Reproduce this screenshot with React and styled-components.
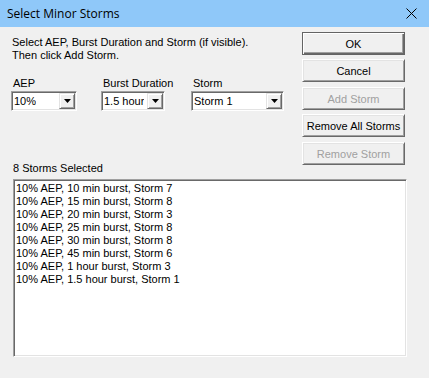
import styled, { createGlobalStyle } from "styled-components";
import { useState } from "react";

const GlobalStyle = createGlobalStyle`
  html, body {
    margin: 0;
    padding: 0;
    background: #f0f0f0;
  }
  * {
    box-sizing: border-box;
  }
`;

const aepOptions = ["10%"];
const durationOptions = ["1.5 hour"];
const stormOptions = ["Storm 1"];

const initialStorms = [
  "10% AEP, 10 min burst, Storm 7",
  "10% AEP, 15 min burst, Storm 8",
  "10% AEP, 20 min burst, Storm 3",
  "10% AEP, 25 min burst, Storm 8",
  "10% AEP, 30 min burst, Storm 8",
  "10% AEP, 45 min burst, Storm 6",
  "10% AEP, 1 hour burst, Storm 3",
  "10% AEP, 1.5 hour burst, Storm 1",
];

const Combo = ({ value, width }) => (
  <StyledCombo $width={width}>
    <ComboText>{value}</ComboText>
    <DropButton>
      <svg width="7" height="4" viewBox="0 0 7 4">
        <path d="M0 0h7L3.5 4z" fill="#000" />
      </svg>
    </DropButton>
  </StyledCombo>
);

const App = () => {
  const [storms, setStorms] = useState(initialStorms);

  return (
    <>
      <GlobalStyle />
      <StyledWindow>
        <TitleBar>
          <Title>Select Minor Storms</Title>
          <CloseButton aria-label="Close">
            <svg width="11" height="11" viewBox="0 0 11 11">
              <path d="M0.5 0.5l10 10M10.5 0.5l-10 10" stroke="#000" strokeWidth="1" />
            </svg>
          </CloseButton>
        </TitleBar>
        <StyledBody>
          <TopSection>
            <LeftColumn>
              <Instructions>
                Select AEP, Burst Duration and Storm (if visible).
                <br />
                Then click Add Storm.
              </Instructions>
              <FieldRow>
                <Field $width={90}>
                  <FieldLabel>AEP</FieldLabel>
                  <Combo value={aepOptions[0]} width={66} />
                </Field>
                <Field $width={90}>
                  <FieldLabel>Burst Duration</FieldLabel>
                  <Combo value={durationOptions[0]} width={64} />
                </Field>
                <Field $width={93}>
                  <FieldLabel>Storm</FieldLabel>
                  <Combo value={stormOptions[0]} width={93} />
                </Field>
              </FieldRow>
              <CountLabel>{storms.length} Storms Selected</CountLabel>
            </LeftColumn>
            <ButtonColumn>
              <DialogButton $default>OK</DialogButton>
              <DialogButton>Cancel</DialogButton>
              <DialogButton disabled>Add Storm</DialogButton>
              <DialogButton onClick={() => setStorms([])}>Remove All Storms</DialogButton>
              <DialogButton disabled>Remove Storm</DialogButton>
            </ButtonColumn>
          </TopSection>
          <StormList>
            {storms.map((storm) => (
              <StormItem key={storm}>{storm}</StormItem>
            ))}
          </StormList>
        </StyledBody>
      </StyledWindow>
    </>
  );
};

export default App;

const StyledWindow = styled.div`
  width: 429px;
  height: 378px;
  display: flex;
  flex-direction: column;
  background: #f0f0f0;
  font-family: "Liberation Sans", Arial, sans-serif;
  font-size: 11px;
  color: #000;
`;

const TitleBar = styled.div`
  height: 27px;
  flex-shrink: 0;
  display: flex;
  align-items: center;
  justify-content: space-between;
  background: #8fc8f9;
  padding: 0 12px 0 7px;
`;

const Title = styled.div`
  font-family: "Open Sans", "Noto Sans", sans-serif;
  font-size: 12px;
  color: #000;
`;

const CloseButton = styled.div`
  display: flex;
  align-items: center;
`;

const StyledBody = styled.div`
  flex: 1;
  display: flex;
  flex-direction: column;
  padding: 5px 24px 21px 13px;
`;

const TopSection = styled.div`
  display: flex;
  justify-content: space-between;
  align-items: flex-start;
`;

const LeftColumn = styled.div`
  display: flex;
  flex-direction: column;
`;

const Instructions = styled.div`
  margin-top: 4px;
  margin-left: -1px;
  line-height: 13px;
`;

const FieldRow = styled.div`
  display: flex;
  margin-top: 15px;
  margin-left: -2px;
`;

const Field = styled.div`
  width: ${(p) => p.$width}px;
  display: flex;
  flex-direction: column;
`;

const FieldLabel = styled.div`
  line-height: 13px;
  margin-left: 2px;
  margin-bottom: 1px;
  white-space: nowrap;
`;

const StyledCombo = styled.div`
  width: ${(p) => p.$width}px;
  height: 20px;
  display: flex;
  align-items: center;
  justify-content: space-between;
  background: #fff;
  border: 1px solid;
  border-color: #a0a0a0 #fff #fff #a0a0a0;
  box-shadow: inset 1px 1px #696969, inset -1px -1px #e3e3e3;
  padding: 1px;
`;

const ComboText = styled.span`
  padding-left: 1px;
  white-space: nowrap;
  overflow: hidden;
`;

const DropButton = styled.div`
  width: 16px;
  height: 16px;
  flex-shrink: 0;
  display: flex;
  align-items: center;
  justify-content: center;
  background: #f0f0f0;
  border: 1px solid;
  border-color: #e3e3e3 #696969 #696969 #e3e3e3;
  box-shadow: inset 1px 1px #fff, inset -1px -1px #a0a0a0;
`;

const CountLabel = styled.div`
  margin-top: 51px;
  line-height: 13px;
  margin-bottom: 2px;
`;

const ButtonColumn = styled.div`
  display: flex;
  flex-direction: column;
  gap: 4px;
`;

const DialogButton = styled.button`
  width: 103px;
  height: 23px;
  padding: 0;
  font-family: "Liberation Sans", Arial, sans-serif;
  font-size: 11px;
  color: #000;
  background: #f0f0f0;
  border: 1px solid;
  border-color: ${(p) => (p.$default ? "#646464" : "#fff #696969 #696969 #fff")};
  box-shadow: ${(p) =>
    p.$default
      ? "inset 1px 1px #fff, inset -1px -1px #696969, inset -2px -2px #a0a0a0"
      : "inset 1px 1px #e3e3e3, inset -1px -1px #a0a0a0"};
  &:nth-child(3),
  &:nth-child(5) {
    margin-top: 1px;
  }
  &:disabled {
    color: #a0a0a0;
  }
`;

const StormList = styled.div`
  flex: 1;
  margin: 2px -2px 0 0;
  background: #fff;
  border: 1px solid;
  border-color: #a0a0a0 #fff #fff #a0a0a0;
  box-shadow: inset 1px 1px #696969, inset -1px -1px #e3e3e3;
  padding: 2px 2px;
`;

const StormItem = styled.div`
  line-height: 13px;
  white-space: nowrap;
`;
